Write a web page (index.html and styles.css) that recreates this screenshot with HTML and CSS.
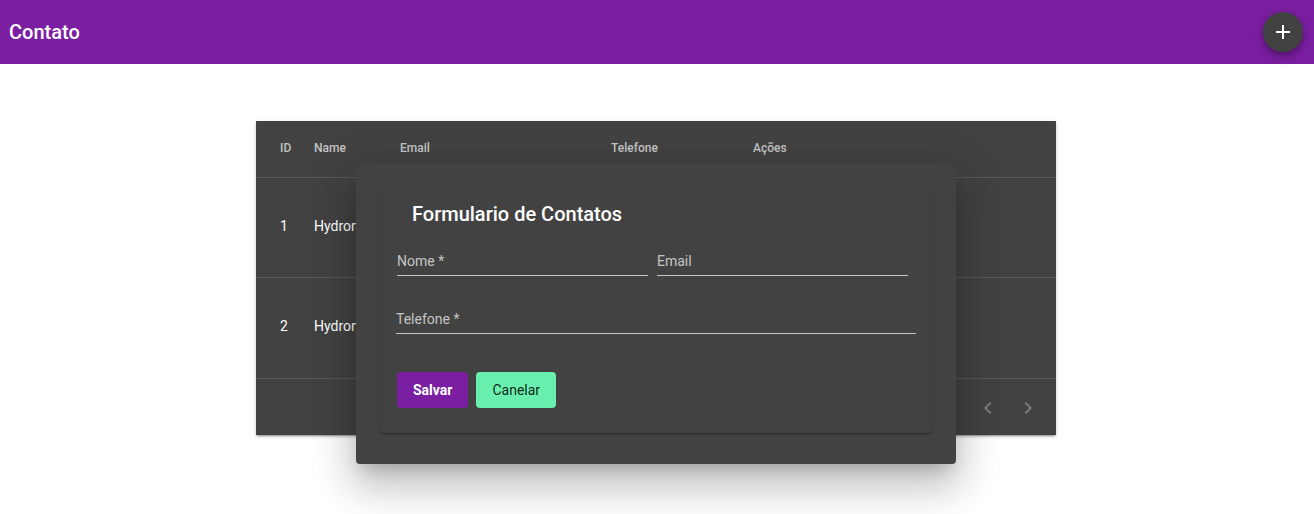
FILE: index.html
```html
<!DOCTYPE html>
<html lang="pt">
<head>
<meta charset="utf-8">
<title>Contato</title>
<link rel="stylesheet" href="styles.css">
</head>
<body>
<header class="toolbar">
  <span class="toolbar-title">Contato</span>
  <button class="fab" aria-label="Adicionar">
    <svg viewBox="0 0 24 24" width="24" height="24"><path d="M19 13h-6v6h-2v-6H5v-2h6V5h2v6h6v2z" fill="#fff"/></svg>
  </button>
</header>

<main class="content">
  <section class="table-card">
    <div class="row header-row">
      <div>ID</div><div>Name</div><div>Email</div><div>Telefone</div><div>Ações</div>
    </div>
    <div class="row body-row">
      <div>1</div><div class="name-cell">Hydron</div><div></div><div></div><div></div>
    </div>
    <div class="row body-row">
      <div>2</div><div class="name-cell">Hydron</div><div></div><div></div><div></div>
    </div>
    <div class="paginator">
      <button class="page-btn" aria-label="Anterior">
        <svg viewBox="0 0 24 24" width="24" height="24"><path d="M15.41 7.41L14 6l-6 6 6 6 1.41-1.41L10.83 12z"/></svg>
      </button>
      <button class="page-btn" aria-label="Próxima">
        <svg viewBox="0 0 24 24" width="24" height="24"><path d="M10 6L8.59 7.41 13.17 12l-4.58 4.59L10 18l6-6z"/></svg>
      </button>
    </div>
  </section>
</main>

<div class="dialog">
  <div class="form-card">
    <h2 class="form-title">Formulario de Contatos</h2>
    <div class="field-row">
      <div class="field"><span class="label">Nome *</span></div>
      <div class="field"><span class="label">Email</span></div>
    </div>
    <div class="field field-full"><span class="label">Telefone *</span></div>
    <div class="actions">
      <button class="btn btn-primary">Salvar</button>
      <button class="btn btn-accent">Canelar</button>
    </div>
  </div>
</div>
</body>
</html>
```
FILE: styles.css
```css
* { box-sizing: border-box; }

body {
  margin: 0;
  font-family: Roboto, "Helvetica Neue", sans-serif;
  background: #fff;
  height: 514px;
  overflow: hidden;
}

.toolbar {
  height: 64px;
  background: #7b1fa2;
  display: flex;
  align-items: center;
  justify-content: space-between;
  padding: 0 11px 0 9px;
}

.toolbar-title {
  color: #fff;
  font-size: 20px;
  font-weight: 500;
  line-height: 32px;
}

.fab {
  width: 40px;
  height: 40px;
  border-radius: 50%;
  border: none;
  background: #424242;
  display: flex;
  align-items: center;
  justify-content: center;
  padding: 0;
  box-shadow: 0 3px 5px -1px rgba(0,0,0,.2), 0 6px 10px 0 rgba(0,0,0,.14), 0 1px 18px 0 rgba(0,0,0,.12);
}

.content {
  padding-top: 57px;
  display: flex;
  justify-content: center;
  padding-right: 2px;
}

.table-card {
  width: 800px;
  background: #424242;
  color: #fff;
  box-shadow: 0 3px 1px -2px rgba(0,0,0,.2), 0 2px 2px 0 rgba(0,0,0,.14), 0 1px 5px 0 rgba(0,0,0,.12);
}

.row {
  display: grid;
  grid-template-columns: 34px 86px 211px 142px 1fr;
  align-items: center;
  padding-left: 24px;
  border-bottom: 1px solid rgba(255,255,255,.12);
  white-space: nowrap;
  overflow: hidden;
}

.header-row {
  height: 57px;
  padding-bottom: 2px;
  font-size: 12px;
  font-weight: 500;
  color: rgba(255,255,255,.7);
}

.body-row {
  height: 100px;
  padding-bottom: 4px;
  font-size: 14px;
  color: #fff;
}

.body-row:nth-child(3) { height: 101px; }

.paginator {
  height: 56px;
  padding-top: 2px;
  display: flex;
  align-items: center;
  justify-content: flex-end;
  padding-right: 8px;
}

.page-btn {
  width: 40px;
  height: 40px;
  border: none;
  background: transparent;
  padding: 0;
  display: flex;
  align-items: center;
  justify-content: center;
}

.page-btn svg { fill: rgba(255,255,255,.3); }

.dialog {
  position: absolute;
  left: 356px;
  top: 164px;
  width: 600px;
  height: 300px;
  background: #424242;
  border-radius: 4px;
  padding: 24px;
  box-shadow: 0 11px 15px -7px rgba(0,0,0,.2), 0 24px 38px 3px rgba(0,0,0,.14), 0 9px 46px 8px rgba(0,0,0,.12);
}

.form-card {
  background: #424242;
  border-radius: 4px;
  padding: 14px 16px 25px;
  box-shadow: 0 2px 1px -1px rgba(0,0,0,.2), 0 1px 1px 0 rgba(0,0,0,.14), 0 1px 3px 0 rgba(0,0,0,.12);
}

.form-title {
  margin: 0 0 0 16px;
  font-size: 20px;
  font-weight: 500;
  line-height: 24px;
  color: #fff;
}

.field-row {
  display: flex;
  gap: 9px;
  margin-top: 27px;
  padding-left: 1px;
}

.field-row .field { width: 251px; }

.field {
  padding-bottom: 6px;
  border-bottom: 1px solid rgba(255,255,255,.7);
}

.field-full { margin-top: 35px; }

.label {
  display: block;
  font-size: 14px;
  line-height: 16px;
  color: rgba(255,255,255,.7);
}

.actions {
  display: flex;
  gap: 8px;
  margin-top: 38px;
  padding-left: 1px;
}

.btn {
  height: 36px;
  min-width: 64px;
  padding: 0 16px;
  border: none;
  border-radius: 4px;
  font-family: Roboto, sans-serif;
  font-size: 14px;
}

.btn-primary {
  background: #7b1fa2;
  color: #fff;
  font-weight: 700;
}

.btn-accent {
  background: #69f0ae;
  color: rgba(0,0,0,.87);
  font-weight: 400;
}
```
